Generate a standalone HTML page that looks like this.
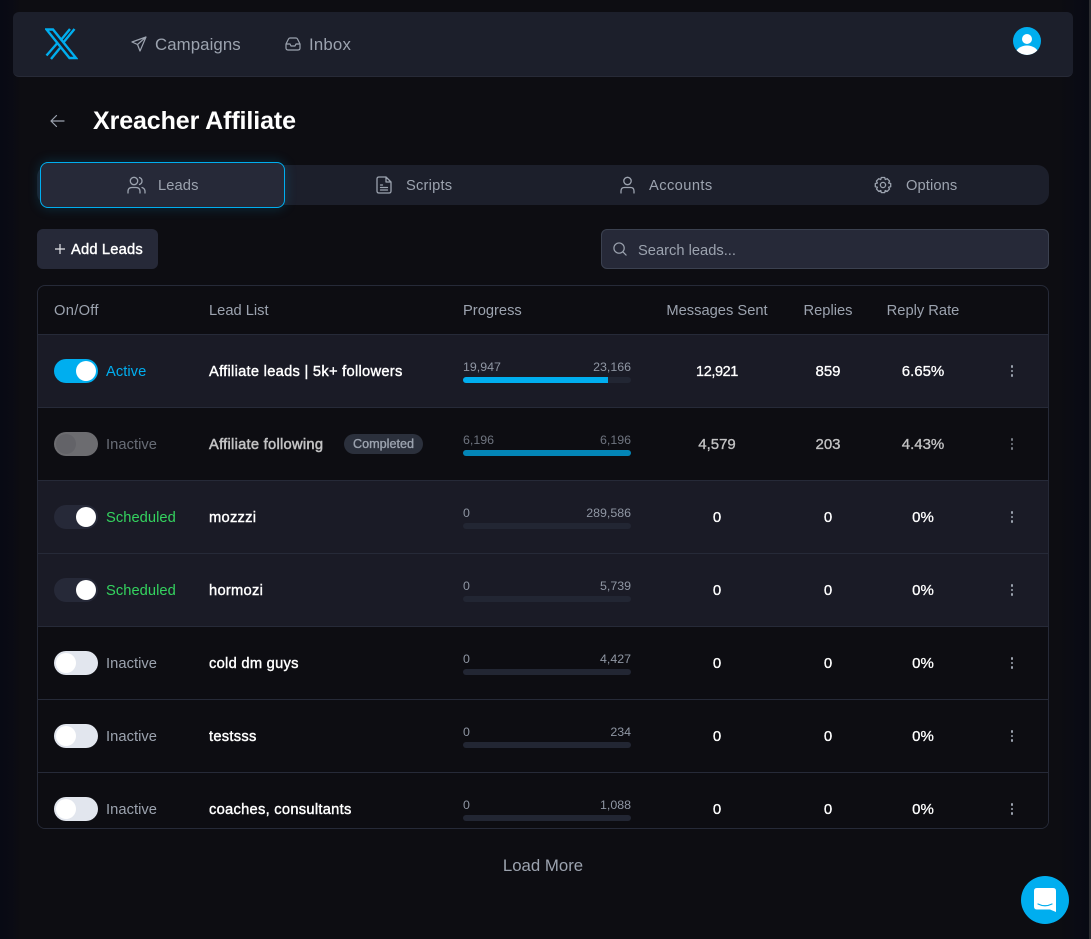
<!DOCTYPE html>
<html><head><meta charset="utf-8"><title>Xreacher Affiliate</title>
<style>
*{box-sizing:border-box}
html,body{margin:0;padding:0;background:#080a13;overflow:hidden}
body{width:1091px;height:939px;position:relative;font-family:"Liberation Sans",sans-serif;color:#fff}
.a{position:absolute;white-space:nowrap}
.t{position:absolute;white-space:nowrap;line-height:20px;height:20px}
.c{transform:translateX(-50%)}
.hd{font-size:14.7px;color:#9ca3af;top:301px}
.row{position:absolute;left:0;width:1010px;height:73px;border-top:1px solid #262a38}
.d{background:#1a1b26}.l{background:#0d0d12}
.tg{position:absolute;left:16px;width:44px;height:24px;border-radius:12px;top:24px}
.kn{position:absolute;top:2px;width:20px;height:20px;border-radius:50%;background:#fff}
.st{position:absolute;left:68px;top:27px;font-size:14.7px;line-height:20px;letter-spacing:.05px}
.nm{position:absolute;left:171px;top:27px;font-size:14.7px;line-height:20px;letter-spacing:.27px;color:#fff;white-space:nowrap;-webkit-text-stroke:.4px currentColor}
.p1{position:absolute;left:425px;top:22px;font-size:12.4px;line-height:20px;color:#8f96a3}
.p2{position:absolute;right:417px;top:22px;font-size:12.4px;line-height:20px;color:#8f96a3}
.bar{position:absolute;left:425px;top:42px;width:168px;height:6px;border-radius:3px;background:#222633;overflow:hidden}
.bar i{display:block;height:6px;background:#00aeef}
.v{position:absolute;top:27px;font-size:15px;line-height:20px;transform:translateX(-50%);white-space:nowrap;-webkit-text-stroke:.3px currentColor}
.dots{position:absolute;left:972px;top:30px;width:4px;height:12px}
.dots b{position:absolute;left:.6px;width:2.8px;height:2.8px;border-radius:50%;background:#9ca3af}
</style></head><body>
<div class="a" style="left:0;top:0;width:1091px;height:939px;background:linear-gradient(90deg,#080a14 0,#0a0b14 12px,#0d0d12 20px,#0d0d12 1060px,#0a0b14 1078px,#080a13 1088px);"></div>
<div class="a" style="left:1089px;top:0;width:2px;height:939px;background:#2b2c30"></div>

<!-- nav -->
<div class="a" style="left:13px;top:12px;width:1060px;height:65px;background:#1c1f2b;border-radius:6px;border-bottom:1px solid #272a37"></div>
<svg class="a" style="left:45px;top:28px" width="33" height="32" viewBox="0 0 33 32" fill="none" stroke="#00aeef" stroke-width="2.400">
<path d="M1.500 1.500H8L31 30H24.500Z"/>
<path d="M25 1 15.500 12.500M29.500 1 18 15M1.500 27.500 12 15.500M6 31 15 20"/>
</svg>
<svg class="a" style="left:131px;top:36px" width="16" height="16" viewBox="0 0 16 16" fill="none" stroke="#9ca3af" stroke-width="1.200" stroke-linejoin="round" stroke-linecap="round"><path d="M15 1 1 6l5.500 2.500L9 15zM15 1 6.500 8.500"/></svg>
<div class="t" style="left:155px;top:35px;font-size:16.8px;color:#9ca3af;letter-spacing:.1px">Campaigns</div>
<svg class="a" style="left:285px;top:37px" width="16" height="14" viewBox="0 0 16 14" fill="none" stroke="#9ca3af" stroke-width="1.200" stroke-linejoin="round"><path d="M1 7 3.500 2Q4 1 5 1H11Q12 1 12.500 2L15 7V11Q15 13 13 13H3Q1 13 1 11ZM1 7H5L6 9H10L11 7H15"/></svg>
<div class="t" style="left:309px;top:35px;font-size:16.8px;color:#9ca3af;letter-spacing:.2px">Inbox</div>
<svg class="a" style="left:1013px;top:27px" width="28" height="28" viewBox="0 0 28 28"><defs><clipPath id="cp"><circle cx="14" cy="14" r="14"/></clipPath></defs><circle cx="14" cy="14" r="14" fill="#00aeef"/><g clip-path="url(#cp)" fill="#fff"><circle cx="14" cy="12" r="5"/><ellipse cx="14" cy="26" rx="11" ry="7.500"/></g></svg>

<!-- title -->
<svg class="a" style="left:49px;top:113px" width="16" height="16" viewBox="0 0 16 16" fill="none" stroke="#9ca3af" stroke-width="1.200" stroke-linecap="round" stroke-linejoin="round"><path d="M15 8H2M7.500 2.500 2 8l5.500 5.500"/></svg>
<div class="a" style="left:93px;top:106px;font-size:25px;line-height:30px;font-weight:bold;letter-spacing:-.1px">Xreacher Affiliate</div>

<!-- tabs -->
<div class="a" style="left:37px;top:165px;width:1012px;height:40px;background:#1c1f2b;border-radius:12px"></div>
<div class="a" style="left:40px;top:162px;width:245px;height:46px;background:#262938;border:1px solid #00aeef;border-radius:8px;box-shadow:0 0 12px rgba(0,174,239,.22)"></div>
<svg class="a" style="left:127px;top:176px" width="19" height="18" viewBox="0 0 19 18" fill="none" stroke="#9ca3af" stroke-width="1.300" stroke-linecap="round"><circle cx="7" cy="5" r="3.700"/><path d="M1 17v-1.500Q1 11.500 5 11.500H9Q13 11.500 13 15.500V17M12.500 1.500Q15 2.500 15 5T12.500 8.500M15 11.500Q18 12.500 18 15.500V17"/></svg>
<div class="t" style="left:158px;top:176px;font-size:14.7px;color:#9ca3af;letter-spacing:.1px">Leads</div>
<svg class="a" style="left:376px;top:176px" width="16" height="18" viewBox="0 0 16 18" fill="none" stroke="#9ca3af" stroke-width="1.300" stroke-linejoin="round" stroke-linecap="round"><path d="M10 1H3Q1 1 1 3V15Q1 17 3 17H13Q15 17 15 15V6ZM10 1V6H15M4.500 9H6.500M4.500 11.500H11.500M4.500 14H11.500"/></svg>
<div class="t" style="left:406px;top:176px;font-size:14.7px;color:#9ca3af;letter-spacing:.2px">Scripts</div>
<svg class="a" style="left:620px;top:176px" width="15" height="18" viewBox="0 0 15 18" fill="none" stroke="#9ca3af" stroke-width="1.300" stroke-linecap="round"><circle cx="7.500" cy="5" r="3.700"/><path d="M1 17V15Q1 11.500 4.500 11.500H10.500Q14 11.500 14 15V17"/></svg>
<div class="t" style="left:649px;top:176px;font-size:14.7px;color:#9ca3af;letter-spacing:.4px">Accounts</div>
<svg class="a" style="left:874px;top:176px" width="18" height="18" viewBox="0 0 18 18" fill="none" stroke="#9ca3af" stroke-width="1.300" stroke-linejoin="round"><circle cx="9" cy="9" r="2.600"/><path d="M7.300 1.500H10.700L11.300 3.600 13.200 2.700 15.600 5.100 14.600 7 16.700 7.500V10.700L14.600 11.200 15.500 13.100 13.100 15.500 11.200 14.500 10.700 16.600H7.300L6.800 14.500 4.900 15.500 2.500 13.100 3.400 11.200 1.300 10.700V7.500L3.400 7 2.400 5.100 4.800 2.700 6.700 3.600Z"/></svg>
<div class="t" style="left:906px;top:176px;font-size:14.7px;color:#9ca3af;letter-spacing:.1px">Options</div>

<!-- actions -->
<div class="a" style="left:37px;top:229px;width:121px;height:40px;background:#262938;border-radius:6px"></div>
<svg class="a" style="left:55px;top:244px" width="10" height="10" viewBox="0 0 10 10" stroke="#e5e7eb" stroke-width="1.200"><path d="M5 0V10M0 5H10"/></svg>
<div class="t" style="left:71px;top:240px;font-size:14.7px;color:#fff;letter-spacing:.18px;-webkit-text-stroke:.4px #fff">Add Leads</div>
<div class="a" style="left:601px;top:229px;width:448px;height:40px;background:#262938;border:1px solid #3b4150;border-radius:6px"></div>
<svg class="a" style="left:613px;top:242px" width="14" height="14" viewBox="0 0 15 15" fill="none" stroke="#9ca3af" stroke-width="1.300" stroke-linecap="round"><circle cx="6.500" cy="6.500" r="5.500"/><path d="M10.700 10.700 14 14"/></svg>
<div class="t" style="left:638px;top:241px;font-size:14.7px;color:#9ca3af">Search leads...</div>

<!-- table -->
<div class="a" style="left:37px;top:285px;width:1012px;height:544px;border:1px solid #262a38;border-radius:8px;background:#0d0d12;overflow:hidden">
 <div class="row d" style="top:48px"><div class="tg" style="background:#00aeef"><div class="kn" style="left:22px"></div></div><div class="st" style="color:#00aeef">Active</div><div class="nm">Affiliate leads | 5k+ followers</div><div class="p1">19,947</div><div class="p2">23,166</div><div class="bar"><i style="width:145px"></i></div><div class="v" style="left:679px;font-size:14.5px;letter-spacing:-.4px">12,921</div><div class="v" style="left:790px">859</div><div class="v" style="left:885px">6.65%</div><div class="dots"><b style="top:0"></b><b style="top:4.500px"></b><b style="top:9px"></b></div></div>
 <div class="row l" style="top:121px"><div style="position:absolute;left:0;top:0;width:1010px;height:72px;opacity:.75"><div class="tg" style="background:#8c8c90"><div class="kn" style="left:2px;background:#808085"></div></div><div class="st" style="color:#9ca3af;opacity:.85">Inactive</div><div class="nm" style="-webkit-text-stroke:.5px currentColor">Affiliate following</div><div class="p1">6,196</div><div class="p2">6,196</div><div class="bar"><i style="width:168px"></i></div><div class="v" style="left:679px">4,579</div><div class="v" style="left:790px">203</div><div class="v" style="left:885px">4.43%</div><div class="dots"><b style="top:0"></b><b style="top:4.500px"></b><b style="top:9px"></b></div></div><div style="position:absolute;left:306px;top:26px;width:79px;height:20px;border-radius:10px;background:#2b303c;color:#9ca3af;font-size:12.6px;line-height:20px;text-align:center;-webkit-text-stroke:.35px #9ca3af">Completed</div></div>
 <div class="row d" style="top:194px"><div class="tg" style="background:#262938"><div class="kn" style="left:22px"></div></div><div class="st" style="color:#34d35f">Scheduled</div><div class="nm">mozzzi</div><div class="p1">0</div><div class="p2">289,586</div><div class="bar"></div><div class="v" style="left:679px">0</div><div class="v" style="left:790px">0</div><div class="v" style="left:885px">0%</div><div class="dots"><b style="top:0"></b><b style="top:4.500px"></b><b style="top:9px"></b></div></div>
 <div class="row d" style="top:267px"><div class="tg" style="background:#262938"><div class="kn" style="left:22px"></div></div><div class="st" style="color:#34d35f">Scheduled</div><div class="nm">hormozi</div><div class="p1">0</div><div class="p2">5,739</div><div class="bar"></div><div class="v" style="left:679px">0</div><div class="v" style="left:790px">0</div><div class="v" style="left:885px">0%</div><div class="dots"><b style="top:0"></b><b style="top:4.500px"></b><b style="top:9px"></b></div></div>
 <div class="row l" style="top:340px"><div class="tg" style="background:#e2e6ee"><div class="kn" style="left:2px"></div></div><div class="st" style="color:#9ca3af">Inactive</div><div class="nm">cold dm guys</div><div class="p1">0</div><div class="p2">4,427</div><div class="bar"></div><div class="v" style="left:679px">0</div><div class="v" style="left:790px">0</div><div class="v" style="left:885px">0%</div><div class="dots"><b style="top:0"></b><b style="top:4.500px"></b><b style="top:9px"></b></div></div>
 <div class="row l" style="top:413px"><div class="tg" style="background:#e2e6ee"><div class="kn" style="left:2px"></div></div><div class="st" style="color:#9ca3af">Inactive</div><div class="nm">testsss</div><div class="p1">0</div><div class="p2">234</div><div class="bar"></div><div class="v" style="left:679px">0</div><div class="v" style="left:790px">0</div><div class="v" style="left:885px">0%</div><div class="dots"><b style="top:0"></b><b style="top:4.500px"></b><b style="top:9px"></b></div></div>
 <div class="row l" style="top:486px"><div class="tg" style="background:#e2e6ee"><div class="kn" style="left:2px"></div></div><div class="st" style="color:#9ca3af">Inactive</div><div class="nm">coaches, consultants</div><div class="p1">0</div><div class="p2">1,088</div><div class="bar"></div><div class="v" style="left:679px">0</div><div class="v" style="left:790px">0</div><div class="v" style="left:885px">0%</div><div class="dots"><b style="top:0"></b><b style="top:4.500px"></b><b style="top:9px"></b></div></div>
</div>
<div class="t hd" style="left:54px;letter-spacing:.3px">On/Off</div>
<div class="t hd" style="left:209px">Lead List</div>
<div class="t hd" style="left:463px">Progress</div>
<div class="t hd c" style="left:717px">Messages Sent</div>
<div class="t hd c" style="left:828px">Replies</div>
<div class="t hd c" style="left:923px">Reply Rate</div>

<div class="t c" style="left:543px;top:856px;font-size:16.8px;color:#9ca3af">Load More</div>

<!-- chat -->
<div class="a" style="left:1021px;top:876px;width:48px;height:48px;border-radius:50%;background:#00aeef"></div>
<svg class="a" style="left:1034px;top:888px" width="23" height="24" viewBox="0 0 23 24"><path d="M3 0H19Q22 0 22 3V24L16 21.500H3Q0 21.500 0 18.500V3Q0 0 3 0Z" fill="#fff"/><path d="M4 16Q11 19.500 18 16" fill="none" stroke="#00aeef" stroke-width="1.200" stroke-linecap="round"/></svg>
</body></html>
